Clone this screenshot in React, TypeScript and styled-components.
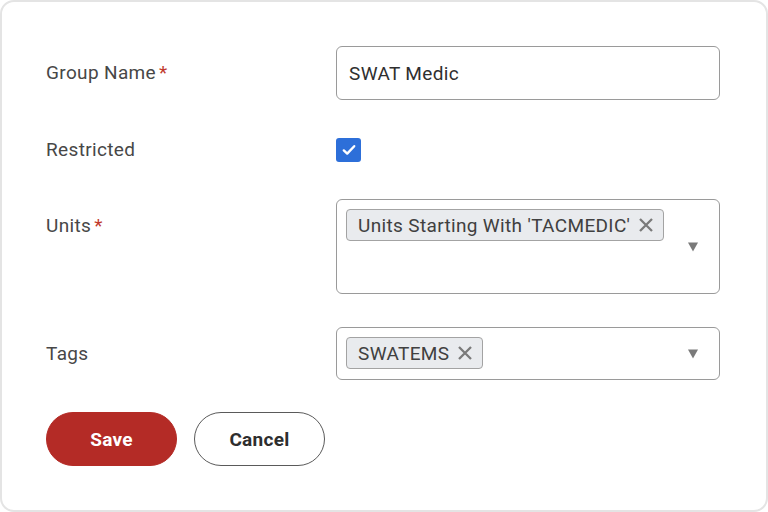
import React from "react";
import styled, { createGlobalStyle } from "styled-components";

const Global = createGlobalStyle`
  html, body { margin: 0; padding: 0; background: #ffffff; }
  body { font-family: Roboto, "Liberation Sans", Arial, sans-serif; }
  * { box-sizing: border-box; }
`;

const Card = styled.div`
  width: 768px;
  height: 512px;
  border: 2px solid #e4e4e4;
  border-radius: 14px;
  background: #ffffff;
  padding: 44px 46px 0 44px;
  display: flex;
  flex-direction: column;
`;

const Row = styled.div<{ $mt: number; $align?: string }>`
  display: grid;
  grid-template-columns: 290px 384px;
  align-items: ${(p) => p.$align || "center"};
  margin-top: ${(p) => p.$mt}px;
`;

const Label = styled.div<{ $pt?: number }>`
  font-size: 19px;
  line-height: 24px;
  color: #474747;
  letter-spacing: 0.35px;
  padding-top: ${(p) => p.$pt || 0}px;
`;

const Req = styled.span`
  color: #c0392b;
  margin-left: 3px;
`;

const TextBox = styled.div`
  height: 54px;
  border: 1px solid #9a9a9a;
  border-radius: 6px;
  display: flex;
  align-items: center;
  padding: 0 12px;
  font-size: 19px;
  letter-spacing: 0.35px;
  color: #2f2f2f;
`;

const Check = styled.div`
  width: 25px;
  height: 24px;
  border-radius: 3px;
  background: #2d6fd9;
  display: flex;
  align-items: center;
  justify-content: center;
`;

const Select = styled.div<{ $h: number }>`
  position: relative;
  height: ${(p) => p.$h}px;
  border: 1px solid #9a9a9a;
  border-radius: 6px;
  padding: 9px 50px 9px 9px;
  display: flex;
  align-items: flex-start;
  flex-wrap: wrap;
`;

const Chip = styled.div`
  height: 32px;
  display: inline-flex;
  align-items: center;
  gap: 8px;
  padding: 0 9px 0 11px;
  background: #e9ebee;
  border: 1px solid #a3a3a3;
  border-radius: 4px;
  font-size: 19px;
  letter-spacing: 0.35px;
  color: #404040;
`;

const Caret = styled.div`
  position: absolute;
  right: 21px;
  top: 50%;
  transform: translateY(-50%);
  width: 0;
  height: 0;
  border-left: 5.5px solid transparent;
  border-right: 5.5px solid transparent;
  border-top: 9px solid #7a7a7a;
`;

const Buttons = styled.div`
  display: flex;
  gap: 17px;
  margin-top: 32px;
`;

const Button = styled.button<{ $primary?: boolean }>`
  width: 131px;
  height: 54px;
  border-radius: 27px;
  font-family: Roboto, "Liberation Sans", Arial, sans-serif;
  font-size: 19px;
  letter-spacing: 0.3px;
  font-weight: 700;
  cursor: pointer;
  background: ${(p) => (p.$primary ? "#b42b26" : "#ffffff")};
  color: ${(p) => (p.$primary ? "#ffffff" : "#2e2e2e")};
  border: ${(p) => (p.$primary ? "1px solid #b42b26" : "1px solid #5a5a5a")};
`;

const X = () => (
  <svg width="16" height="16" viewBox="0 0 16 16">
    <path d="M2 2 L14 14 M14 2 L2 14" stroke="#7a7a7a" strokeWidth="2.3" strokeLinecap="butt" />
  </svg>
);

export default function App() {
  return (
    <>
      <Global />
      <Card>
        <Row $mt={0}>
          <Label>
            Group Name<Req>*</Req>
          </Label>
          <TextBox>SWAT Medic</TextBox>
        </Row>
        <Row $mt={38}>
          <Label>Restricted</Label>
          <Check>
            <svg width="14" height="12" viewBox="0 0 14 12">
              <path d="M1.8 6.4 L5.2 9.6 L12.2 2.2" fill="none" stroke="#ffffff" strokeWidth="2.4" strokeLinecap="round" strokeLinejoin="round" />
            </svg>
          </Check>
        </Row>
        <Row $mt={37} $align="start">
          <Label $pt={15}>
            Units<Req>*</Req>
          </Label>
          <Select $h={95}>
            <Chip>
              Units Starting With 'TACMEDIC'
              <X />
            </Chip>
            <Caret />
          </Select>
        </Row>
        <Row $mt={33}>
          <Label>Tags</Label>
          <Select $h={53}>
            <Chip>
              SWATEMS
              <X />
            </Chip>
            <Caret />
          </Select>
        </Row>
        <Buttons>
          <Button $primary>Save</Button>
          <Button>Cancel</Button>
        </Buttons>
      </Card>
    </>
  );
}
